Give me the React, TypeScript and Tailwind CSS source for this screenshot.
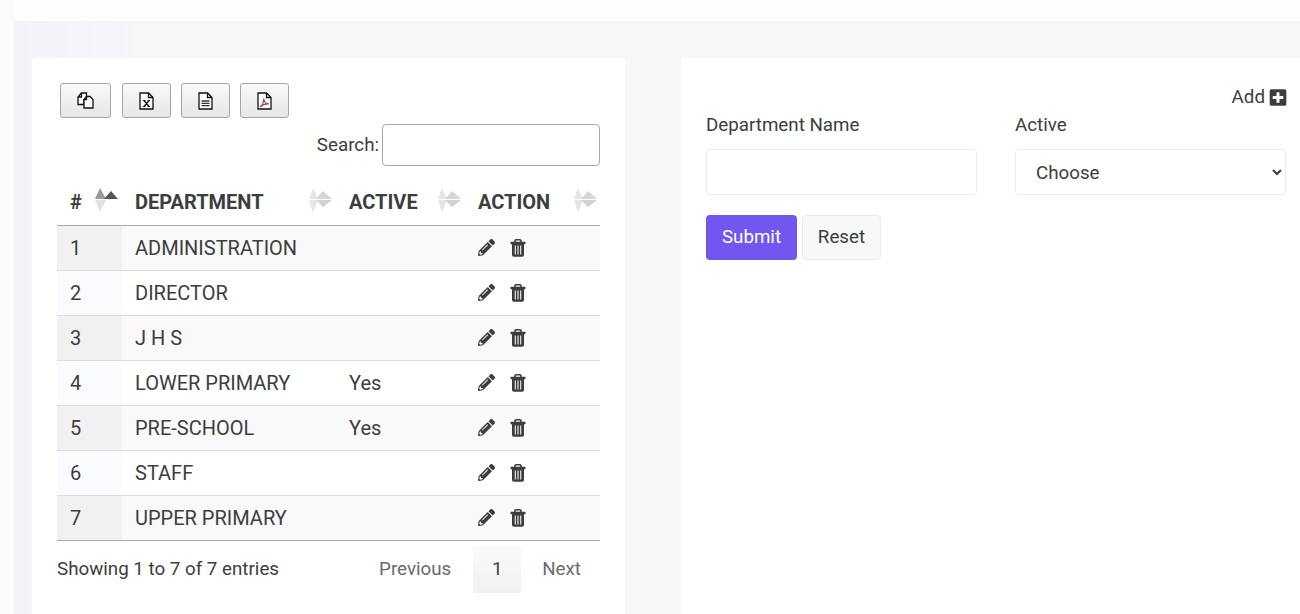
import { FaPencilAlt, FaPlusSquare } from "react-icons/fa";

const rows = [
  { id: 1, name: "ADMINISTRATION", active: "" },
  { id: 2, name: "DIRECTOR", active: "" },
  { id: 3, name: "J H S", active: "" },
  { id: 4, name: "LOWER PRIMARY", active: "Yes" },
  { id: 5, name: "PRE-SCHOOL", active: "Yes" },
  { id: 6, name: "STAFF", active: "" },
  { id: 7, name: "UPPER PRIMARY", active: "" },
];

function SortIcon({ current }: { current?: boolean }) {
  if (current) {
    return (
      <svg width="23" height="25" viewBox="0 0 23 25" className="block shrink-0">
        <polygon points="0,12 11,12 5,24" fill="#e0e0e0" />
        <polygon points="0,11 5,0 11,11" fill="#999999" />
        <polygon points="9,11 16,3 23,11" fill="#555555" />
      </svg>
    );
  }
  return (
    <svg width="23" height="25" viewBox="0 0 23 25" className="block shrink-0">
      <polygon points="0,11 4,0 9,11" fill="#e6e6e6" />
      <polygon points="7,11 14,3 23,11" fill="#d6d6d6" />
      <polygon points="0,12 9,12 4,25" fill="#e6e6e6" />
      <polygon points="7,12 23,12 14,19" fill="#d2d2d2" />
    </svg>
  );
}

function TrashIcon() {
  return (
    <svg width="16" height="18" viewBox="0 0 16 18" className="block">
      <path d="M5 3V1.800Q5 .8 6 .8h4q1 0 1 1V3" fill="none" stroke="#3d3d3d" strokeWidth="1.600" />
      <rect x="0.500" y="2.800" width="15" height="2.400" rx="0.600" fill="#3d3d3d" />
      <path d="M2 5h12v11q0 1.800-1.800 1.800H3.800Q2 17.800 2 16z" fill="#3d3d3d" />
      <path d="M5.300 6.500v9M8 6.500v9M10.700 6.500v9" stroke="#f4f4f4" strokeWidth="1.100" />
    </svg>
  );
}

function CopyIcon() {
  return (
    <svg width="17" height="17" viewBox="0 0 17 17" fill="#fff" stroke="#111" strokeWidth="1.300">
      <path d="M4.500 1h5v4.500L7 7.500V12.500H1V5z" />
      <path d="M4.500 1v4H1" fill="none" />
      <path d="M9.500 4.500h3.500v0l3 3V16H7V7.500z" />
      <path d="M9.500 4.500v3H7" fill="none" />
    </svg>
  );
}

function FileIcon({ kind }: { kind: "excel" | "csv" | "pdf" }) {
  return (
    <svg width="15" height="18" viewBox="0 0 15 18" fill="#fff" stroke="#111" strokeWidth="1.300">
      <path d="M1 1h8.500L14 5.500V17H1z" />
      <path d="M9.500 1v4.500H14" fill="none" />
      {kind === "excel" && (
        <path d="M5 8.500l5 6M10 8.500l-5 6M4 8.500h2.500M8.500 8.500H11M4 14.500h2.500M8.500 14.500H11" strokeWidth="1.200" />
      )}
      {kind === "csv" && <path d="M3.500 9h8M3.500 11.300h8M3.500 13.600h8" strokeWidth="1.300" stroke="#333" />}
      {kind === "pdf" && (
        <path d="M3 15c2.500-1.500 3.500-4.500 3.800-8.500 .4 3.500 2.200 5.500 5.200 5.500-3.500-.4-6.500.6-9 3z" fill="none" stroke="#8a4a5a" strokeWidth="1.100" />
      )}
    </svg>
  );
}

function ExportButton({ width, children }: { width: string; children: React.ReactNode }) {
  return (
    <button className={`flex h-[35px] ${width} items-center justify-center rounded-[3px] border border-[#a5a5a5] bg-gradient-to-b from-[#fafafa] to-[#e6e6e6]`}>
      {children}
    </button>
  );
}

export default function App() {
  return (
    <div
      className="flex h-[614px] w-[1300px] overflow-hidden bg-white text-[18.75px] leading-[27px] text-[#3d3d3d]"
      style={{ fontFamily: "Roboto, sans-serif" }}
    >
      <div className="w-[14px] shrink-0 bg-[#fbfbfc]" />
      <div className="flex flex-1 flex-col bg-gradient-to-r from-[#f2f3f8] to-[#f6f7f9] to-[10%]">
        <div className="h-[21px] shrink-0 rounded-bl-[4px] bg-[#fdfdfe]" />
        <div className="flex flex-1 gap-[56px] pl-[18px] pt-[37px]">
          {/* table card */}
          <div className="h-[600px] w-[593px] shrink-0 rounded-[4px] bg-white pl-[25px] pr-[25px] pt-[25px]">
            <div className="flex gap-[10px] pl-[3px]">
              <ExportButton width="w-[51px] mr-[1px]"><CopyIcon /></ExportButton>
              <ExportButton width="w-[49px]"><FileIcon kind="excel" /></ExportButton>
              <ExportButton width="w-[49px]"><FileIcon kind="csv" /></ExportButton>
              <ExportButton width="w-[49px]"><FileIcon kind="pdf" /></ExportButton>
            </div>
            <div className="mt-[6px] flex items-center justify-end gap-[3px]">
              <label>Search:</label>
              <input className="h-[42px] w-[218px] rounded-[4px] border border-[#a8a8a8] bg-white" />
            </div>
            <table className="mt-[13px] w-[543px] table-fixed border-collapse text-[20px]">
              <thead>
                <tr className="h-[46px] border-b border-[#aaaaaa] text-left font-bold uppercase">
                  <th className="w-[65px] px-[13px]">
                    <div className="flex items-center justify-between">
                      <span className="mt-[2px]">#</span>
                      <span className="mb-[2px] mr-[-9px]"><SortIcon current /></span>
                    </div>
                  </th>
                  <th className="w-[214px] px-[13px]">
                    <div className="flex items-center justify-between">
                      <span className="mt-[2px]">Department</span>
                      <span className="mb-[2px] mr-[-9px]"><SortIcon /></span>
                    </div>
                  </th>
                  <th className="w-[129px] px-[13px]">
                    <div className="flex items-center justify-between">
                      <span className="mt-[2px]">Active</span>
                      <span className="mb-[2px] mr-[-9px]"><SortIcon /></span>
                    </div>
                  </th>
                  <th className="w-[135px] px-[13px]">
                    <div className="flex items-center justify-between">
                      <span className="mt-[2px]">Action</span>
                      <span className="mb-[2px] mr-[-10px]"><SortIcon /></span>
                    </div>
                  </th>
                </tr>
              </thead>
              <tbody>
                {rows.map((r, i) => (
                  <tr
                    key={r.id}
                    className={`h-[45px] border-b ${i === 6 ? "border-[#aaaaaa]" : "border-[#dddddd]"} ${i % 2 === 0 ? "bg-[#f9f9f9]" : "bg-white"}`}
                  >
                    <td className={`px-[13px] pt-[2px] ${i % 2 === 0 ? "bg-[#f1f1f1]" : "bg-[#fafbff]"}`}>{r.id}</td>
                    <td className="px-[13px] pt-[2px]">{r.name}</td>
                    <td className="px-[13px] pt-[2px]">{r.active}</td>
                    <td className="px-[13px]">
                      <div className="flex items-center gap-[15px]">
                        <FaPencilAlt className="h-[17px] w-[17px] text-[#3d3d3d]" />
                        <TrashIcon />
                      </div>
                    </td>
                  </tr>
                ))}
              </tbody>
            </table>
            <div className="flex items-start justify-between">
              <div className="pt-[15px]">Showing 1 to 7 of 7 entries</div>
              <div className="mt-[5px] flex items-center text-[#6b6b6b]">
                <span className="pl-[19px] pr-[22px]">Previous</span>
                <span className="flex h-[47px] w-[48px] items-center justify-center rounded-[3px] bg-gradient-to-b from-[#fafafa] to-[#f1f1f1] text-[#3d3d3d]">1</span>
                <span className="pl-[21px] pr-[19px]">Next</span>
              </div>
            </div>
          </div>
          {/* form card */}
          <div className="h-[600px] flex-1 rounded-tl-[4px] bg-white pl-[25px] pr-[14px]">
            <div className="flex items-center justify-end gap-[4px] pt-[26px]">
              <span>Add</span>
              <FaPlusSquare className="mr-[-1px] h-[19px] w-[18px] text-[#3d3d3d]" />
            </div>
            <div className="mt-[1px] flex gap-[38px]">
              <div className="w-[271px]">
                <label className="block">Department Name</label>
                <input className="mt-[10px] h-[46px] w-full rounded-[4px] border border-[#e9ecef] bg-white" />
              </div>
              <div className="w-[271px]">
                <label className="block">Active</label>
                <select className="mt-[10px] h-[46px] w-full rounded-[4px] border border-[#e9ecef] bg-white pl-[16px] pt-[2px]">
                  <option>Choose</option>
                </select>
              </div>
            </div>
            <div className="mt-[20px] flex gap-[5px]">
              <button className="h-[45px] w-[91px] rounded-[4px] bg-[#7256f0] text-white">Submit</button>
              <button className="h-[45px] w-[79px] rounded-[4px] border border-[#e9ecef] bg-[#f7f8fa]">Reset</button>
            </div>
          </div>
        </div>
      </div>
    </div>
  );
}
